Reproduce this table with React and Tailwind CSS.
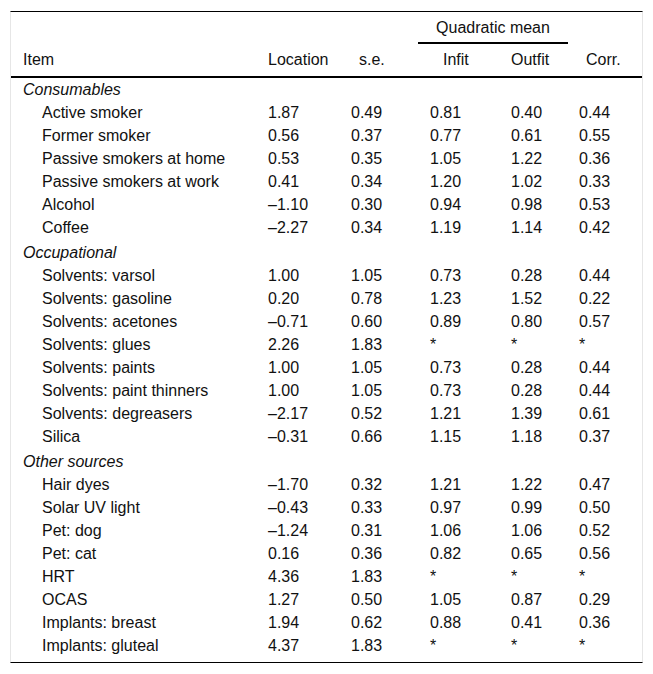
import React from "react";

const sections = [
  {
    title: "Consumables",
    rows: [
      ["Active smoker", "1.87", "0.49", "0.81", "0.40", "0.44"],
      ["Former smoker", "0.56", "0.37", "0.77", "0.61", "0.55"],
      ["Passive smokers at home", "0.53", "0.35", "1.05", "1.22", "0.36"],
      ["Passive smokers at work", "0.41", "0.34", "1.20", "1.02", "0.33"],
      ["Alcohol", "–1.10", "0.30", "0.94", "0.98", "0.53"],
      ["Coffee", "–2.27", "0.34", "1.19", "1.14", "0.42"],
    ],
  },
  {
    title: "Occupational",
    rows: [
      ["Solvents: varsol", "1.00", "1.05", "0.73", "0.28", "0.44"],
      ["Solvents: gasoline", "0.20", "0.78", "1.23", "1.52", "0.22"],
      ["Solvents: acetones", "–0.71", "0.60", "0.89", "0.80", "0.57"],
      ["Solvents: glues", "2.26", "1.83", "*", "*", "*"],
      ["Solvents: paints", "1.00", "1.05", "0.73", "0.28", "0.44"],
      ["Solvents: paint thinners", "1.00", "1.05", "0.73", "0.28", "0.44"],
      ["Solvents: degreasers", "–2.17", "0.52", "1.21", "1.39", "0.61"],
      ["Silica", "–0.31", "0.66", "1.15", "1.18", "0.37"],
    ],
  },
  {
    title: "Other sources",
    rows: [
      ["Hair dyes", "–1.70", "0.32", "1.21", "1.22", "0.47"],
      ["Solar UV light", "–0.43", "0.33", "0.97", "0.99", "0.50"],
      ["Pet: dog", "–1.24", "0.31", "1.06", "1.06", "0.52"],
      ["Pet: cat", "0.16", "0.36", "0.82", "0.65", "0.56"],
      ["HRT", "4.36", "1.83", "*", "*", "*"],
      ["OCAS", "1.27", "0.50", "1.05", "0.87", "0.29"],
      ["Implants: breast", "1.94", "0.62", "0.88", "0.41", "0.36"],
      ["Implants: gluteal", "4.37", "1.83", "*", "*", "*"],
    ],
  },
];

const cols = "grid grid-cols-[257px_83px_79px_81px_68px_64px]";

const Row = ({ cells }) => (
  <div className={`${cols} h-[23px] items-center`}>
    <div className="pl-[31px]">{cells[0]}</div>
    {cells.slice(1).map((c, i) => (
      <div key={i}>{c}</div>
    ))}
  </div>
);

const App = () => {
  return (
    <div className="min-h-screen bg-white pt-[11px] text-[16px] leading-none text-[#111] font-['Liberation_Sans',Arial,sans-serif]">
      <div className="ml-[10px] w-[633px] border-t border-b border-t-black border-b-black border-x border-x-[#e6e6e6] pb-[5px]">
        {/* Header */}
        <div className={`${cols} h-[32px]`}>
          <div className="col-span-3" />
          <div className="col-span-2 ml-[-12px] mr-[11px] pt-[2px] border-b-2 border-black flex items-center justify-center">
            Quadratic mean
          </div>
        </div>
        <div className={`${cols} h-[34px] items-center border-b-2 border-black`}>
          <div className="pl-[12px]">Item</div>
          <div>Location</div>
          <div className="pl-[8px]">s.e.</div>
          <div className="pl-[13px]">Infit</div>
          <div>Outfit</div>
          <div className="pl-[7px]">Corr.</div>
        </div>

        {sections.map((s, si) => (
          <div key={s.title}>
            <div className={`flex items-center pl-[12px] italic ${si === 0 ? "h-[23px]" : "h-[25px] pt-[2px]"}`}>
              {s.title}
            </div>
            {s.rows.map((r) => (
              <Row key={r[0]} cells={r} />
            ))}
          </div>
        ))}
      </div>
    </div>
  );
};

export default App;
